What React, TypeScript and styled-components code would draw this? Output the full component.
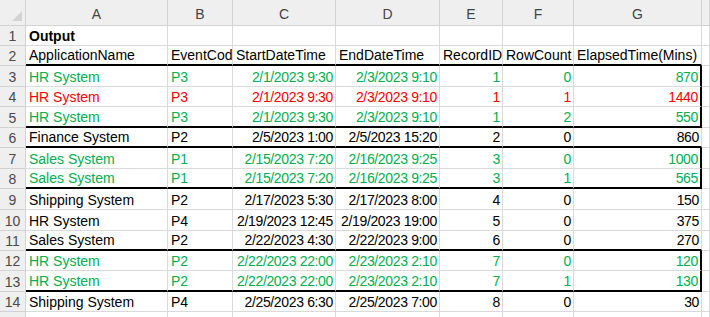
import React from "react";
import styled, { createGlobalStyle } from "styled-components";

const GREEN = "#00b050";
const RED = "#ff0000";
const GRID = "#dadada";
const HEAD_BG = "#efefef";
const HEAD_LINE = "#d2d2d2";

const Global = createGlobalStyle`
  html, body { margin: 0; padding: 0; background: #ffffff; overflow: hidden; }
  body { font-family: "Liberation Sans", Arial, sans-serif; }
`;

const Sheet = styled.div`
  display: grid;
  grid-template-columns: 26px 142px 65px 103px 104px 63px 71px 128px 1fr;
  grid-template-rows: 26px 20px 20px 21px 20px 21px 20px 21px 20px 21px 21px 20px 20px 21px 20px 20px;
  width: 710px;
  height: 317px;
  overflow: hidden;
  background: #ffffff;
`;

const Corner = styled.div`
  box-sizing: border-box;
  background: ${HEAD_BG};
  border-right: 1px solid ${HEAD_LINE};
  border-bottom: 1px solid ${HEAD_LINE};
  display: flex;
  align-items: flex-end;
  justify-content: flex-end;
  padding: 0 3px 4px 0;
`;

const ColHead = styled.div`
  box-sizing: border-box;
  background: ${HEAD_BG};
  border-right: 1px solid ${HEAD_LINE};
  border-bottom: 1px solid ${HEAD_LINE};
  display: flex;
  align-items: center;
  justify-content: center;
  padding-top: 2px;
  color: #444444;
  font-size: 14px;
  font-family: "Liberation Sans", Arial, sans-serif;
`;

const RowHead = styled.div`
  box-sizing: border-box;
  background: ${HEAD_BG};
  border-right: 1px solid ${HEAD_LINE};
  border-bottom: 1px solid ${HEAD_LINE};
  display: flex;
  align-items: flex-end;
  justify-content: center;
  line-height: 18px;
  color: #4a4a4a;
  font-size: 14px;
`;

type CellProps = {
  $right?: boolean;
  $color?: string;
  $bold?: boolean;
  $thickBottom?: boolean;
  $thickRight?: boolean;
};

const Cell = styled.div<CellProps>`
  box-sizing: border-box;
  border-right: ${(p) => (p.$thickRight ? "2px solid #000" : `1px solid ${GRID}`)};
  border-bottom: ${(p) => (p.$thickBottom ? "2px solid #000" : `1px solid ${GRID}`)};
  display: flex;
  align-items: flex-end;
  justify-content: ${(p) => (p.$right ? "flex-end" : "flex-start")};
  padding: 0 ${(p) => (p.$right ? "2px" : "3px")} 0 3px;
  overflow: hidden;
  white-space: nowrap;
  line-height: 18px;
  font-size: 14px;
  font-weight: ${(p) => (p.$bold ? 700 : 400)};
  color: ${(p) => p.$color || "#000000"};
  letter-spacing: ${(p) => (p.$right ? "-0.35px" : "0")};
`;

type Row = {
  color?: string;
  values: string[];
  thickBottom?: boolean;
  box?: boolean;
};

const rows: Row[] = [
  { values: ["Output", "", "", "", "", "", ""] },
  {
    values: ["ApplicationName", "EventCode", "StartDateTime", "EndDateTime", "RecordID", "RowCount", "ElapsedTime(Mins)"],
    thickBottom: true,
  },
  { color: GREEN, box: true, values: ["HR System", "P3", "2/1/2023 9:30", "2/3/2023 9:10", "1", "0", "870"] },
  { color: RED, box: true, values: ["HR System", "P3", "2/1/2023 9:30", "2/3/2023 9:10", "1", "1", "1440"] },
  { color: GREEN, box: true, thickBottom: true, values: ["HR System", "P3", "2/1/2023 9:30", "2/3/2023 9:10", "1", "2", "550"] },
  { thickBottom: true, values: ["Finance System", "P2", "2/5/2023 1:00", "2/5/2023 15:20", "2", "0", "860"] },
  { color: GREEN, box: true, values: ["Sales System", "P1", "2/15/2023 7:20", "2/16/2023 9:25", "3", "0", "1000"] },
  { color: GREEN, box: true, thickBottom: true, values: ["Sales System", "P1", "2/15/2023 7:20", "2/16/2023 9:25", "3", "1", "565"] },
  { values: ["Shipping System", "P2", "2/17/2023 5:30", "2/17/2023 8:00", "4", "0", "150"] },
  { values: ["HR System", "P4", "2/19/2023 12:45", "2/19/2023 19:00", "5", "0", "375"] },
  { thickBottom: true, values: ["Sales System", "P2", "2/22/2023 4:30", "2/22/2023 9:00", "6", "0", "270"] },
  { color: GREEN, box: true, values: ["HR System", "P2", "2/22/2023 22:00", "2/23/2023 2:10", "7", "0", "120"] },
  { color: GREEN, box: true, thickBottom: true, values: ["HR System", "P2", "2/22/2023 22:00", "2/23/2023 2:10", "7", "1", "130"] },
  { values: ["Shipping System", "P4", "2/25/2023 6:30", "2/25/2023 7:00", "8", "0", "30"] },
  { values: ["", "", "", "", "", "", ""] },
];

const letters = ["A", "B", "C", "D", "E", "F", "G", ""];

export default function App() {
  return (
    <>
      <Global />
      <Sheet>
        <Corner>
          <svg width="10" height="10" viewBox="0 0 10 10">
            <polygon points="10,0 10,10 0,10" fill="#d3d3d3" />
          </svg>
        </Corner>
        {letters.map((l, i) => (
          <ColHead key={"h" + i}>{l}</ColHead>
        ))}
        {rows.map((r, ri) => {
          const isData = ri >= 2;
          const isLast = ri === rows.length - 1;
          return (
            <React.Fragment key={"r" + ri}>
              <RowHead>{isLast ? "" : ri + 1}</RowHead>
              {r.values.map((v, ci) => (
                <Cell
                  key={ci}
                  $right={isData && ci >= 2}
                  $bold={ri === 0 && ci === 0}
                  $color={r.color}
                  $thickBottom={r.thickBottom}
                  $thickRight={ci === 6 && !!r.box}
                >
                  {v}
                </Cell>
              ))}
              <Cell />
            </React.Fragment>
          );
        })}
      </Sheet>
    </>
  );
}
